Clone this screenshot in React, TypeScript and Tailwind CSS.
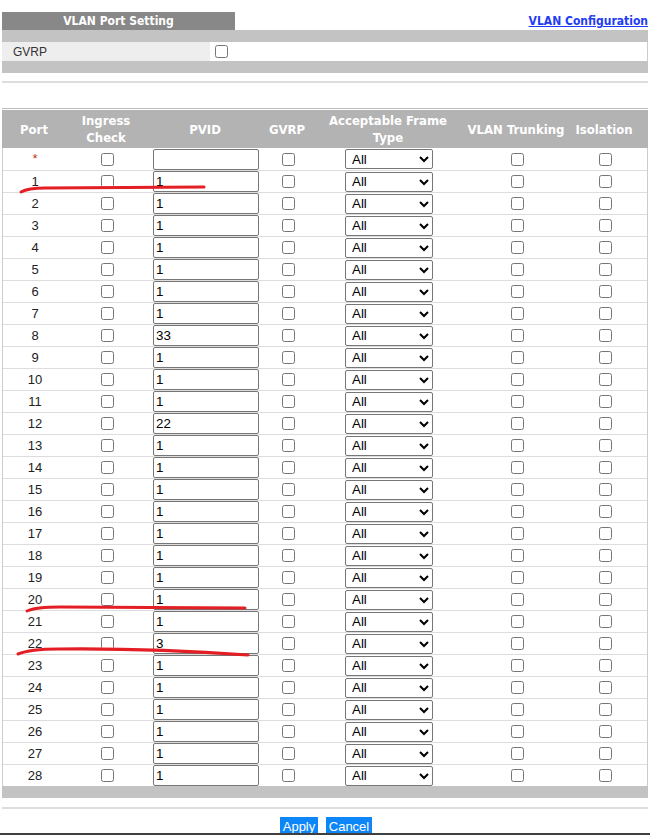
import { ReactNode } from 'react'

const pvids: Record<number, string> = { 8: '33', 12: '22', 22: '3' }
const ports = Array.from({ length: 28 }, (_, i) => i + 1)

const cols = 'grid grid-cols-[64px_80px_118px_46px_156px_100px_82px]'
const head = "font-['DejaVu_Sans_Condensed','DejaVu_Sans',sans-serif] font-bold"

function Box() {
  return <input type="checkbox" className="m-0 h-[13px] w-[13px]" />
}

function Cell({ children, className = '' }: { children?: ReactNode; className?: string }) {
  return <div className={`flex items-center justify-center ${className}`}>{children}</div>
}

function FrameSelect() {
  return (
    <select className="h-[20px] w-[88px] rounded-[2px] border border-[#767676] bg-white pl-[2px] text-[13.33px] text-black">
      <option>All</option>
      <option>Tagged Only</option>
      <option>Untagged Only</option>
    </select>
  )
}

function Row({ port, pvid }: { port: ReactNode; pvid: string }) {
  return (
    <div className={`${cols} h-[22px] border-t border-[#dddddd] first:border-t-0`}>
      <Cell>{port}</Cell>
      <Cell>
        <Box />
      </Cell>
      <Cell>
        <input
          type="text"
          defaultValue={pvid}
          className="h-[21px] w-[106px] rounded-[2px] border border-[#767676] bg-white px-[2px] text-[13.33px] text-black"
        />
      </Cell>
      <Cell>
        <Box />
      </Cell>
      <Cell>
        <FrameSelect />
      </Cell>
      <Cell>
        <Box />
      </Cell>
      <Cell className="pr-[6px]">
        <Box />
      </Cell>
    </div>
  )
}

export default function App() {
  return (
    <div className="relative min-h-[835px] bg-white pt-[12px] font-['Liberation_Sans',Arial,sans-serif] text-[13px] text-[#222]">
      <div className="mx-[2px]">
        <div className="flex h-[18px] items-center justify-between">
          <div
            className={`flex h-[18px] w-[233px] items-center justify-center bg-[#888888] text-[12px] leading-none text-white ${head}`}
          >
            VLAN Port Setting
          </div>
          <a href="#" className={`text-[12px] leading-none text-[#1f3cf5] underline ${head}`}>
            VLAN Configuration
          </a>
        </div>
        <div className="h-[12px] bg-[#c3c3c3]" />
        <div className="flex h-[19px] border-r border-[#cccccc]">
          <div className="flex w-[208px] items-center bg-[#eeeeee] pl-[11px] text-[12px] text-[#333]">GVRP</div>
          <div className="flex items-center pl-[5px]">
            <Box />
          </div>
        </div>
        <div className="h-[12px] bg-[#c3c3c3]" />
        <div className="mt-[8px] h-[2px] bg-[#dddddd]" />
        <div className="mt-[25px] h-px bg-[#bbbbbb]" />

        <div className={`${cols} mt-px h-[38px] bg-[#b3b3b3] text-[13px] leading-[17px] text-white ${head}`}>
          <Cell>Port</Cell>
          <Cell className="text-center">
            Ingress
            <br />
            Check
          </Cell>
          <Cell>PVID</Cell>
          <Cell>GVRP</Cell>
          <Cell className="text-center">
            Acceptable Frame
            <br />
            Type
          </Cell>
          <Cell className="whitespace-nowrap">VLAN Trunking</Cell>
          <Cell className="pr-[6px]">Isolation</Cell>
        </div>
        <div className="border-x border-[#cccccc]">
          <Row port={<span className="text-[#c0392b]">*</span>} pvid="" />
          {ports.map((p) => (
            <Row key={p} port={p} pvid={pvids[p] ?? '1'} />
          ))}
        </div>
        <div className="h-[12px] bg-[#c3c3c3]" />
        <div className="mt-[9px] h-[2px] bg-[#dddddd]" />
        <div className="mt-[8px] flex justify-center gap-[8px] pl-[2px]">
          <button className="h-[20px] w-[38px] bg-[#0d86f7] text-[13px] text-white">Apply</button>
          <button className="h-[20px] w-[46px] bg-[#0d86f7] text-[13px] text-white">Cancel</button>
        </div>
      </div>

      <svg className="pointer-events-none absolute left-0 top-0" width="650" height="835">
        <g fill="none" stroke="#e31e24" strokeWidth="3" strokeLinecap="round">
          <path d="M21 192 Q28 188 45 188 L204 187" />
          <path d="M27 611 Q36 607 60 607 L245 608" />
          <path d="M18 654 Q30 649 58 649 Q150 648 248 655" />
        </g>
      </svg>
      <div className="fixed bottom-0 left-0 right-0 h-[2px] bg-[#3f3f3f]" />
    </div>
  )
}
